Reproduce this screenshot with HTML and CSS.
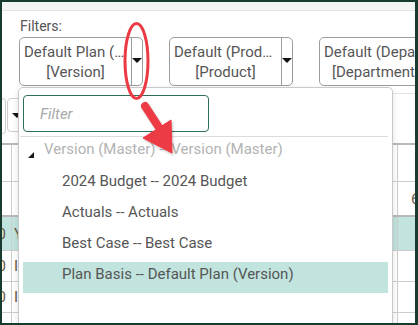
FILE: index.html
```html
<!DOCTYPE html>
<html>
<head>
<meta charset="utf-8">
<link rel="stylesheet" href="styles.css">
</head>
<body>
<div class="frame">
  <div class="topstrip"></div>
  <div class="filters">
    <div class="label">Filters:</div>
    <div class="selects">
      <div class="select">
        <div class="sel-text"><span class="l1">Default Plan (Version)</span><span class="l2">[Version]</span></div>
        <div class="sel-arrow"><span class="tri"></span></div>
      </div>
      <div class="select">
        <div class="sel-text"><span class="l1">Default (Product)</span><span class="l2">[Product]</span></div>
        <div class="sel-arrow"><span class="tri"></span></div>
      </div>
      <div class="select">
        <div class="sel-text"><span class="l1">Default (Department)</span><span class="l2">[Department]</span></div>
        <div class="sel-arrow"><span class="tri"></span></div>
      </div>
    </div>
  </div>
  <div class="row2">
    <div class="box-a"></div>
    <div class="box-b"><span class="tri"></span></div>
    <div class="row2-fill"></div>
  </div>
  <div class="grid">
    <div class="tr r1"><div class="c1"></div><div class="c2"></div><div class="c3"></div></div>
    <div class="tr r2"><div class="c1"></div><div class="c2"></div><div class="c3">6</div></div>
    <div class="tr r3 sel"><div class="c1">0</div><div class="c2">Y</div><div class="c3"></div></div>
    <div class="tr r4"><div class="c1">0</div><div class="c2">I</div><div class="c3"></div></div>
    <div class="tr r5"><div class="c1">0</div><div class="c2">I</div><div class="c3"></div></div>
    <div class="tr r6"><div class="c1"></div><div class="c2"></div><div class="c3"></div></div>
  </div>

  <div class="popup">
    <input class="search" type="text" placeholder="Filter">
    <div class="divider"></div>
    <div class="tree-head"><span class="head-tri"></span><span class="head-text">Version (Master) -- Version (Master)</span></div>
    <div class="item">2024 Budget -- 2024 Budget</div>
    <div class="item">Actuals -- Actuals</div>
    <div class="item">Best Case -- Best Case</div>
    <div class="item selected">Plan Basis -- Default Plan (Version)</div>
  </div>

  <svg class="annot" width="418" height="325" viewBox="0 0 418 325">
    <defs>
      <filter id="sh" x="-20%" y="-20%" width="140%" height="140%">
        <feDropShadow dx="1" dy="1.5" stdDeviation="1.2" flood-color="#000" flood-opacity="0.25"/>
      </filter>
    </defs>
    <ellipse cx="136.5" cy="61" rx="11.5" ry="37.5" fill="none" stroke="#ec3a44" stroke-width="3"/>
    <g filter="url(#sh)" fill="#ec3a44" stroke="#ec3a44">
      <line x1="145" y1="106" x2="158" y2="126" stroke-width="8" stroke-linecap="round"/>
      <polygon points="143,138 171,120 172,153" stroke-width="1" stroke-linejoin="round"/>
    </g>
  </svg>
</div>
</body>
</html>
```
FILE: styles.css
```css
html, body {
  margin: 0;
  padding: 0;
}
body {
  width: 418px;
  height: 325px;
  box-sizing: border-box;
  padding: 2px 3px 2px 2px;
  background: #183b2f;
  font-family: Roboto, "Liberation Sans", sans-serif;
  overflow: hidden;
}
.frame {
  position: relative;
  width: 413px;
  height: 321px;
  background: #ffffff;
  overflow: hidden;
}
.topstrip {
  height: 8px;
  background: #f3f4f4;
  border-bottom: 1px solid #e2e3e3;
}
.filters {
  padding: 7px 0 0 17px;
}
.label {
  padding-left: 1px;
  font-size: 14px;
  line-height: 16px;
  color: #555555;
  margin-bottom: 3px;
}
.selects {
  display: flex;
  gap: 26px;
}
.select {
  flex: none;
  width: 124px;
  height: 49px;
  box-sizing: border-box;
  border: 1px solid #9d9d9d;
  border-radius: 5px;
  display: flex;
}
.sel-text {
  width: 111px;
  box-sizing: border-box;
  padding: 0 4px;
  display: flex;
  flex-direction: column;
  justify-content: center;
  text-align: center;
  font-size: 15px;
  line-height: 20px;
  color: #565656;
}
.l1, .l2 {
  display: block;
  white-space: nowrap;
  overflow: hidden;
  text-overflow: ellipsis;
}
.sel-arrow {
  flex: 1;
  border-left: 1px solid #9d9d9d;
  display: flex;
  align-items: center;
  justify-content: center;
}
.tri {
  display: block;
  width: 0;
  height: 0;
  border-left: 5px solid transparent;
  border-right: 5px solid transparent;
  border-top: 5px solid #111111;
  margin-top: -3px;
}
.row2 {
  margin-top: 7px;
  height: 50px;
  display: flex;
  align-items: flex-start;
}
.box-a {
  width: 3px;
  height: 34px;
  margin-top: 5px;
  border: 1px solid #cfcfcf;
  border-left: none;
  border-radius: 0 4px 4px 0;
}
.box-b {
  flex: none;
  width: 30px;
  height: 34px;
  margin-top: 5px;
  margin-left: 1px;
  box-sizing: border-box;
  border: 1px solid #cfcfcf;
  border-radius: 4px;
  padding-left: 4px;
  display: flex;
  align-items: center;
}
.box-b .tri {
  margin-top: 0;
}
.row2-fill {
  flex: 1;
  border-top: 1px solid #e3e3e3;
}
.grid {
  border-top: 2px solid #b8b8b8;
}
.tr {
  display: flex;
  border-bottom: 1px solid #cdcdcd;
  font-size: 15px;
  color: #6a5846;
}
.r1 { height: 36px; }
.r2 { height: 33px; border-bottom: 2px solid #b8b8b8; }
.r3 { height: 33px; }
.r4 { height: 30px; }
.r5 { height: 30px; }
.r6 { height: 30px; border-bottom: none; }
.sel { background: #c1e4de; }
.c1 {
  flex: none;
  width: 10px;
  box-sizing: border-box;
  border-right: 1px solid #cdcdcd;
  display: flex;
  align-items: center;
  justify-content: flex-end;
  padding-right: 5px;
  overflow: hidden;
}
.c2 {
  flex: 1;
  border-right: 1px solid #cdcdcd;
  display: flex;
  align-items: center;
  padding-left: 2px;
}
.c3 {
  flex: none;
  width: 17px;
  box-sizing: border-box;
  display: flex;
  align-items: center;
  padding-left: 13px;
  white-space: nowrap;
}
.popup {
  position: absolute;
  left: 16px;
  top: 85px;
  width: 375px;
  bottom: -6px;
  box-sizing: border-box;
  background: #ffffff;
  border: 1px solid #c9c9c9;
  border-radius: 5px 5px 0 0;
  box-shadow: 0 2px 6px rgba(0, 0, 0, 0.12);
}
.search {
  display: block;
  margin: 7px 0 0 4px;
  width: 186px;
  height: 37px;
  box-sizing: border-box;
  border: 1px solid #2e6f58;
  border-radius: 4px;
  padding: 0 0 0 16px;
  font-family: Roboto, "Liberation Sans", sans-serif;
  font-size: 15px;
  outline: none;
  background: #fff;
}
.search::placeholder {
  color: #a9a9a9;
  font-style: italic;
}
.divider {
  height: 1px;
  background: #dcdcdc;
  margin: 4px 4px 0 1px;
}
.tree-head {
  height: 32px;
  display: flex;
  align-items: flex-start;
}
.head-tri {
  width: 0;
  height: 0;
  margin: 15px 0 0 9px;
  border-bottom: 6px solid #1a1a1a;
  border-left: 6px solid transparent;
}
.head-text {
  margin-left: 10px;
  font-size: 15px;
  line-height: 25px;
  color: #b3b3b3;
}
.item {
  height: 31px;
  box-sizing: border-box;
  margin: 0 4px;
  padding-left: 39px;
  font-size: 15px;
  line-height: 25px;
  color: #565656;
}
.item.selected {
  background: #c1e4de;
}
.annot {
  position: absolute;
  left: -2px;
  top: -2px;
  pointer-events: none;
}
```
